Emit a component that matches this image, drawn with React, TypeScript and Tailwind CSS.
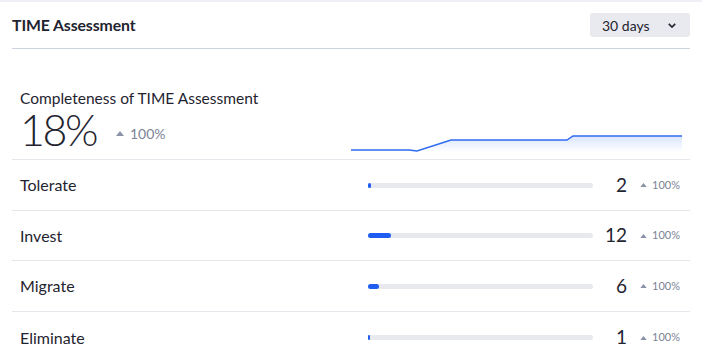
const rows = [
  { label: "Tolerate", value: 2, fill: 3 },
  { label: "Invest", value: 12, fill: 23 },
  { label: "Migrate", value: 6, fill: 11 },
  { label: "Eliminate", value: 1, fill: 2 },
];

function Up({ className }: { className: string }) {
  return (
    <svg viewBox="0 0 8 5" className={className}>
      <path d="M4 0 L8 5 L0 5 Z" fill="currentColor" />
    </svg>
  );
}

function Sparkline() {
  const pts = "0,18 58,18 66,19 100,8 216,8 222,4 331,4";
  return (
    <svg width="331" height="20" viewBox="0 0 331 20" className="block">
      <defs>
        <linearGradient id="sp" x1="0" y1="0" x2="0" y2="1">
          <stop offset="0%" stopColor="#2f6bf0" stopOpacity="0.18" />
          <stop offset="100%" stopColor="#2f6bf0" stopOpacity="0" />
        </linearGradient>
      </defs>
      <polygon points={`${pts} 331,20 0,20`} fill="url(#sp)" />
      <polyline points={pts} fill="none" stroke="#2f6bf0" strokeWidth="1.5" />
    </svg>
  );
}

export default function App() {
  return (
    <div
      className="h-[356px] w-[702px] overflow-hidden border-t-2 border-[#eef0f5] bg-white text-[#1f2430]"
      style={{ fontFamily: "Lato, 'Noto Sans', sans-serif" }}
    >
      <header className="mx-3 flex h-[47px] items-center justify-between border-b border-[#cdd3e0]">
        <h2 className="text-[15.8px] font-bold tracking-[-0.1px]">TIME Assessment</h2>
        <button className="flex h-[24px] w-[100px] items-center justify-between rounded-[3px] bg-[#e8eaef] pl-[12px] pr-[14px] text-[14px]">
          <span>30 days</span>
          <svg viewBox="0 0 10 6" className="h-[5px] w-[8px]">
            <path d="M1 1 L5 5 L9 1" fill="none" stroke="#1f2430" strokeWidth="2" />
          </svg>
        </button>
      </header>

      <section className="mx-3 flex h-[111px] items-end justify-between border-b border-[#e3e6eb] pb-[7px] pl-2">
        <div>
          <p className="text-[15.5px] leading-[20px]">Completeness of TIME Assessment</p>
          <div className="flex items-center">
            <span className="text-[43px] font-light leading-[44px] tracking-[-2.5px]">18%</span>
            <span className="ml-[20px] mt-[6px] flex items-center gap-[6px] text-[14px] text-[#7b8396]">
              <Up className="h-[5px] w-[8px] text-[#8a93a6]" />
              100%
            </span>
          </div>
        </div>
        <div className="mr-[8px]">
          <Sparkline />
        </div>
      </section>

      {rows.map((r, i) => (
        <div
          key={r.label}
          className={`mx-3 grid ${i === 1 ? "h-[50px]" : "h-[51px]"} grid-cols-[356px_225px_34px_1fr] items-center ${
            i < rows.length - 1 ? "border-b border-[#e3e6eb]" : ""
          }`}
        >
          <span className="pl-2 text-[16px]">{r.label}</span>
          <div className="h-[5px] rounded-full bg-[#e7e9ee]">
            <div className="h-[5px] rounded-full bg-[#1f5cf2]" style={{ width: r.fill }} />
          </div>
          <span className="text-right text-[19px]">{r.value}</span>
          <span className="ml-[13px] flex items-center gap-[5px] text-[11px] text-[#7b8396]">
            <Up className="h-[4px] w-[7px] text-[#8a93a6]" />
            100%
          </span>
        </div>
      ))}
    </div>
  );
}
